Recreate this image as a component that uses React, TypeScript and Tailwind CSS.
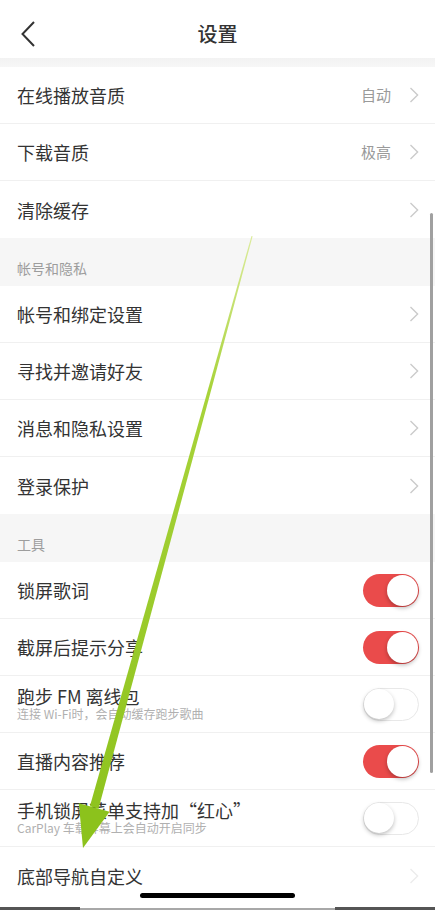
import React from "react";

type Row = {
  label: string;
  value?: string;
  sub?: string;
  toggle?: boolean;
  faint?: boolean;
};

const groups: { title?: string; rows: Row[] }[] = [
  {
    rows: [
      { label: "在线播放音质", value: "自动" },
      { label: "下载音质", value: "极高" },
      { label: "清除缓存" },
    ],
  },
  {
    title: "帐号和隐私",
    rows: [
      { label: "帐号和绑定设置" },
      { label: "寻找并邀请好友" },
      { label: "消息和隐私设置" },
      { label: "登录保护" },
    ],
  },
  {
    title: "工具",
    rows: [
      { label: "锁屏歌词", toggle: true },
      { label: "截屏后提示分享", toggle: true },
      { label: "跑步 FM 离线包", sub: "连接 Wi-Fi时，会自动缓存跑步歌曲", toggle: false },
      { label: "直播内容推荐", toggle: true },
      { label: "手机锁屏菜单支持加“红心”", sub: "CarPlay 车载屏幕上会自动开启同步", toggle: false },
      { label: "底部导航自定义", faint: true },
    ],
  },
];

function Chevron({ faint }: { faint?: boolean }) {
  return (
    <svg width="10" height="16" viewBox="0 0 10 16" className="shrink-0">
      <path
        d="M1.5 1 L8.6 8 L1.5 15"
        fill="none"
        stroke={faint ? "#ececec" : "#cbcbcb"}
        strokeWidth="1.4"
      />
    </svg>
  );
}

function Toggle({ on }: { on: boolean }) {
  if (on) {
    return (
      <div className="flex h-[33px] w-[56px] shrink-0 items-center justify-end rounded-full bg-[#ea4b4b] p-[1px]">
        <div className="h-[31px] w-[31px] rounded-full bg-white shadow-[0_2px_4px_rgba(0,0,0,0.28)]" />
      </div>
    );
  }
  return (
    <div className="flex h-[33px] w-[56px] shrink-0 items-center justify-start rounded-full border-[1.5px] border-[#e8e8e8] bg-white">
      <div className="h-[30px] w-[30px] rounded-full bg-white shadow-[0_2px_4px_rgba(0,0,0,0.25)]" />
    </div>
  );
}

function SettingRow({ row, last }: { row: Row; last: boolean }) {
  return (
    <div
      className={
        "flex h-[57px] items-center justify-between bg-white pl-[17px] pr-[16px] " +
        (last ? "" : "border-b border-[#f0f0f0]")
      }
    >
      {row.sub ? (
        <div className="flex flex-col">
          <span className="text-[18px] leading-[20px] text-[#333]">{row.label}</span>
          <span className="text-[12px] leading-[16px] text-[#b0b0b0]">{row.sub}</span>
        </div>
      ) : (
        <span className="text-[18px] leading-[24px] text-[#333]">{row.label}</span>
      )}
      {row.toggle !== undefined ? (
        <Toggle on={row.toggle} />
      ) : (
        <div className="flex items-center gap-[18px]">
          {row.value && <span className="text-[15px] text-[#9a9a9a]">{row.value}</span>}
          <Chevron faint={row.faint} />
        </div>
      )}
    </div>
  );
}

export default function App() {
  return (
    <main className="relative h-[910px] w-[435px] overflow-hidden bg-white font-['Noto_Sans_CJK_SC',sans-serif]">
      {/* header */}
      <div className="grid h-[58px] grid-cols-[1fr_auto_1fr] items-center bg-white pt-[9px]">
        <div className="pl-[21px]">
          <svg width="14" height="26" viewBox="0 0 14 26">
            <path d="M13 1 L1.5 13 L13 25" fill="none" stroke="#333" strokeWidth="2" />
          </svg>
        </div>
        <h1 className="text-[20px] font-medium text-[#333]">设置</h1>
        <div />
      </div>
      <div className="h-[9px] bg-gradient-to-b from-[#f2f2f2] to-[#f7f7f7]" />

      {groups.map((g, gi) => (
        <div key={gi}>
          {g.title && (
            <div className="flex h-[48px] items-end bg-[#f6f6f6] pb-[9px] pl-[17px] text-[14px] leading-[18px] text-[#9d9d9d]">
              {g.title}
            </div>
          )}
          {g.rows.map((r, ri) => (
            <SettingRow key={r.label} row={r} last={ri === g.rows.length - 1} />
          ))}
        </div>
      ))}

      {/* bottom edge */}
      <div className="flex h-[6px] items-end">
        <div className="h-[3px] w-[80px] bg-[#555]" />
        <div className="h-[2px] flex-1 bg-[#a8a8a8]" />
        <div className="h-[3px] w-[100px] bg-[#555]" />
      </div>

      {/* scroll indicator */}
      <div className="absolute left-[430px] top-[213px] h-[560px] w-[3px] rounded-full bg-[#a0a0a0]" />

      {/* home indicator */}
      <div className="absolute left-[140px] top-[893px] h-[5px] w-[155px] rounded-full bg-black" />

      {/* green annotation arrow */}
      <svg className="pointer-events-none absolute left-0 top-0" width="435" height="910" viewBox="0 0 435 910">
        <defs>
          <linearGradient id="arrowGrad" x1="252" y1="236" x2="83" y2="848" gradientUnits="userSpaceOnUse">
            <stop offset="0" stopColor="#dbeb9a" />
            <stop offset="0.25" stopColor="#a8d33a" />
            <stop offset="1" stopColor="#8cc21c" />
          </linearGradient>
        </defs>
        <polygon points="251.5,235.9 252.6,236.2 98.5,808.7 89.9,806.3" fill="url(#arrowGrad)" />
        <polygon points="83,848 78.8,803.2 109.6,811.8" fill="#8cc21c" />
      </svg>
    </main>
  );
}
